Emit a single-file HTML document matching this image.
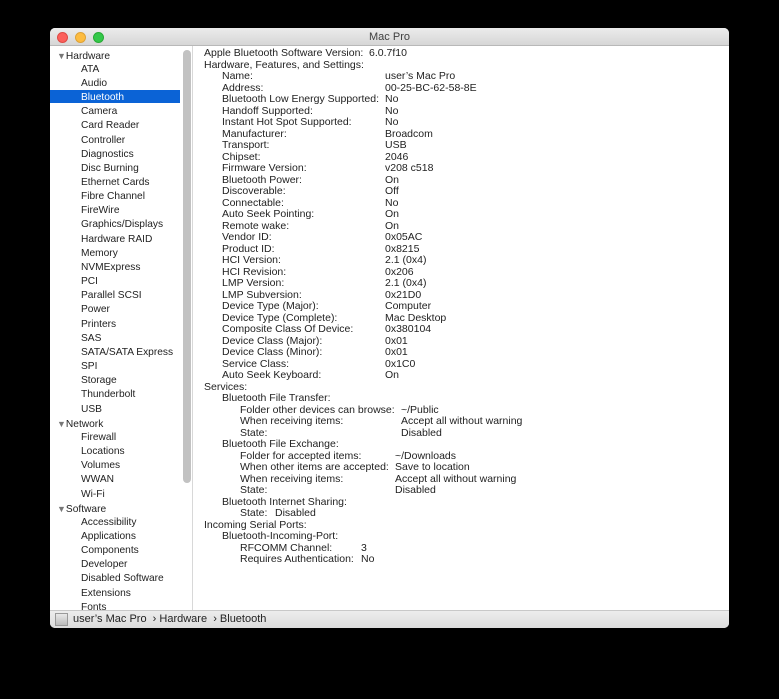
<!DOCTYPE html>
<html><head><meta charset="utf-8"><style>
*{margin:0;padding:0;box-sizing:border-box}
body{width:779px;height:699px;background:#000;font-family:"Liberation Sans",sans-serif;position:relative;overflow:hidden}
#win{position:absolute;left:50px;top:28px;width:679px;height:600px;background:#fff;border-radius:5px;overflow:hidden}
#title{position:absolute;left:0;top:0;width:679px;height:18px;background:linear-gradient(#ececec,#d6d6d6);border-bottom:1px solid #b8b8b8;text-align:center;font-size:11px;line-height:18px;color:#404040}
.dot{position:absolute;top:4px;width:11px;height:11px;border-radius:50%}
#side{position:absolute;left:0;top:18px;width:143px;height:564px;background:#fff;border-right:1px solid #d8d8d8;font-size:10.2px;color:#222}
.si{position:absolute;left:31px;height:14px;line-height:14px;white-space:nowrap}
.sh{left:7px}
.sel{position:absolute;left:0;top:44px;width:130px;height:13px;background:#0b63d6}
#thumb{position:absolute;left:133px;top:4px;width:8px;height:433px;background:#c2c2c2;border-radius:4px}
#content{position:absolute;left:144px;top:18px;width:535px;height:564px;font-size:10.5px;color:#222}
.r{position:absolute;height:11.5px;line-height:11.5px;white-space:nowrap}
#status{position:absolute;left:0;top:582px;width:679px;height:18px;background:linear-gradient(#ededed,#dcdcdc);border-top:1px solid #c8c8c8;font-size:11px;line-height:17px;color:#222}
</style></head><body>
<div id="win">
<div id="title">Mac Pro
<div class="dot" style="left:7px;background:#fc605c;border:1px solid #de4a45"></div>
<div class="dot" style="left:25px;background:#fdbc40;border:1px solid #dea236"></div>
<div class="dot" style="left:43px;background:#34c84a;border:1px solid #27aa35"></div>
</div>
<div id="side">
<div class="sel"></div>
<div id="thumb"></div>
<div id="sl"></div>
</div>
<div id="content"></div>
<div id="status"><div style="position:absolute;left:5px;top:2px;width:13px;height:13px;background:linear-gradient(#e8e8e8,#bcbcbc);border:1px solid #999"></div><span style="position:absolute;left:23px">user’s Mac Pro &nbsp;› Hardware &nbsp;› Bluetooth</span></div>
</div>
<script>
var side=[["▼Hardware",1],"ATA","Audio","Bluetooth","Camera","Card Reader","Controller","Diagnostics","Disc Burning","Ethernet Cards","Fibre Channel","FireWire","Graphics/Displays","Hardware RAID","Memory","NVMExpress","PCI","Parallel SCSI","Power","Printers","SAS","SATA/SATA Express","SPI","Storage","Thunderbolt","USB",["▼Network",1],"Firewall","Locations","Volumes","WWAN","Wi-Fi",["▼Software",1],"Accessibility","Applications","Components","Developer","Disabled Software","Extensions","Fonts"];
var h="";side.forEach(function(s,i){var t=typeof s=="string"?s:s[0],hd=typeof s!="string";var top=(i*14.16+29-7-18-1.5).toFixed(1);
if(hd)t='<span style="color:#777;font-size:9px">▼</span>'+t.slice(1);
h+='<div class="si'+(hd?' sh':'')+'" style="top:'+top+'px;'+(i==3?'color:#fff':'')+'">'+t+'</div>';});
document.getElementById('sl').innerHTML=h;
var rows=[[0,"Apple Bluetooth Software Version:","6.0.7f10",369],[0,"Hardware, Features, and Settings:"],
[1,"Name:","user’s Mac Pro"],[1,"Address:","00-25-BC-62-58-8E"],[1,"Bluetooth Low Energy Supported:","No"],[1,"Handoff Supported:","No"],[1,"Instant Hot Spot Supported:","No"],[1,"Manufacturer:","Broadcom"],[1,"Transport:","USB"],[1,"Chipset:","2046"],[1,"Firmware Version:","v208 c518"],[1,"Bluetooth Power:","On"],[1,"Discoverable:","Off"],[1,"Connectable:","No"],[1,"Auto Seek Pointing:","On"],[1,"Remote wake:","On"],[1,"Vendor ID:","0x05AC"],[1,"Product ID:","0x8215"],[1,"HCI Version:","2.1 (0x4)"],[1,"HCI Revision:","0x206"],[1,"LMP Version:","2.1 (0x4)"],[1,"LMP Subversion:","0x21D0"],[1,"Device Type (Major):","Computer"],[1,"Device Type (Complete):","Mac Desktop"],[1,"Composite Class Of Device:","0x380104"],[1,"Device Class (Major):","0x01"],[1,"Device Class (Minor):","0x01"],[1,"Service Class:","0x1C0"],[1,"Auto Seek Keyboard:","On"],
[0,"Services:"],[1,"Bluetooth File Transfer:"],[2,"Folder other devices can browse:","~/Public",401],[2,"When receiving items:","Accept all without warning",401],[2,"State:","Disabled",401],
[1,"Bluetooth File Exchange:"],[2,"Folder for accepted items:","~/Downloads",395],[2,"When other items are accepted:","Save to location",395],[2,"When receiving items:","Accept all without warning",395],[2,"State:","Disabled",395],
[1,"Bluetooth Internet Sharing:"],[2,"State:","Disabled",275],[0,"Incoming Serial Ports:"],[1,"Bluetooth-Incoming-Port:"],[2,"RFCOMM Channel:","3",361],[2,"Requires Authentication:","No",361]];
var c="";rows.forEach(function(r,i){var top=(i*11.5+53-5.75-46+1).toFixed(2);var x=[204,222,240][r[0]]-194;
c+='<div class="r" style="top:'+top+'px;left:'+x+'px">'+r[1]+'</div>';
if(r[2]){var vx=(r[3]||385)-194;c+='<div class="r" style="top:'+top+'px;left:'+vx+'px">'+r[2]+'</div>';}});
document.getElementById('content').innerHTML=c;
</script>
</body></html>
